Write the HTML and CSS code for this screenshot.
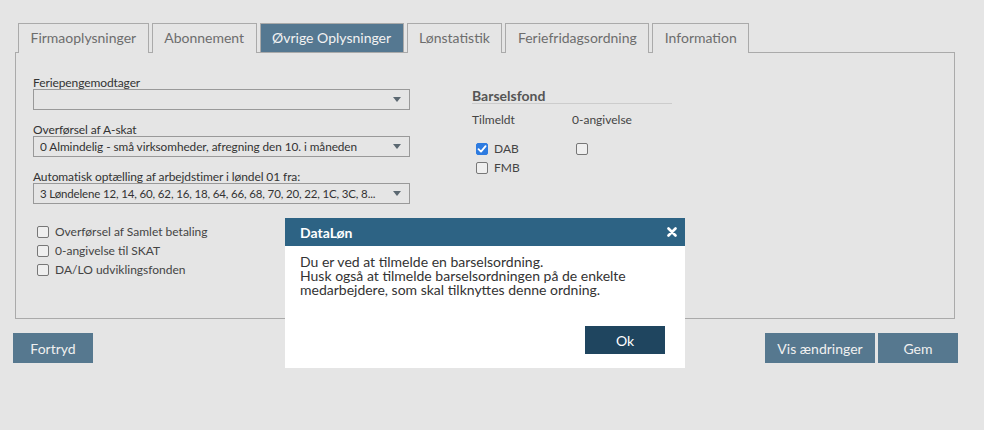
FILE: index.html
```
<!DOCTYPE html>
<html lang="da">
<head>
<meta charset="utf-8">
<title>DataLøn</title>
<link rel="stylesheet" href="styles.css">
</head>
<body>
<div class="page">
  <div class="tabs">
    <div class="tab">Firmaoplysninger</div>
    <div class="tab">Abonnement</div>
    <div class="tab active">Øvrige Oplysninger</div>
    <div class="tab">Lønstatistik</div>
    <div class="tab">Feriefridagsordning</div>
    <div class="tab">Information</div>
  </div>
  <div class="panel">
    <div class="col-left">
      <div class="field">
        <div class="label">Feriepengemodtager</div>
        <div class="select"><span class="value"></span><span class="arrow"></span></div>
      </div>
      <div class="field">
        <div class="label">Overførsel af A-skat</div>
        <div class="select"><span class="value">0 Almindelig - små virksomheder, afregning den 10. i måneden</span><span class="arrow"></span></div>
      </div>
      <div class="field">
        <div class="label">Automatisk optælling af arbejdstimer i løndel 01 fra:</div>
        <div class="select"><span class="value tight">3 Løndelene 12, 14, 60, 62, 16, 18, 64, 66, 68, 70, 20, 22, 1C, 3C, 8...</span><span class="arrow"></span></div>
      </div>
      <div class="checks">
        <div class="check"><span class="box"></span>Overførsel af Samlet betaling</div>
        <div class="check"><span class="box"></span>0-angivelse til SKAT</div>
        <div class="check"><span class="box"></span>DA/LO udviklingsfonden</div>
      </div>
    </div>
    <div class="col-right">
      <div class="heading">Barselsfond</div>
      <div class="fond-grid">
        <div class="sub">Tilmeldt</div>
        <div class="sub">0-angivelse</div>
        <div class="fond-checks">
          <div class="check"><span class="box checked"><svg viewBox="0 0 12 12" width="12" height="12"><path d="M2.5 6.2 L5 8.6 L9.6 3.2" fill="none" stroke="#fff" stroke-width="1.8" stroke-linecap="round" stroke-linejoin="round"/></svg></span>DAB</div>
          <div class="check"><span class="box"></span>FMB</div>
        </div>
        <div class="fond-checks">
          <div class="check"><span class="box"></span></div>
        </div>
      </div>
    </div>
  </div>
  <div class="actions">
    <button class="btn">Fortryd</button>
    <div class="actions-right">
      <button class="btn wide">Vis ændringer</button>
      <button class="btn">Gem</button>
    </div>
  </div>
</div>

<div class="dialog">
  <div class="dialog-head">
    <span class="dialog-title">DataLøn</span>
    <svg class="close" viewBox="0 0 10 10" width="10" height="10"><path d="M1.5 1.5 L8.5 8.5 M8.5 1.5 L1.5 8.5" stroke="#fff" stroke-width="2.6" stroke-linecap="round"/></svg>
  </div>
  <div class="dialog-body">
    <p>Du er ved at tilmelde en barselsordning.<br>Husk også at tilmelde barselsordningen på de enkelte medarbejdere, som skal tilknyttes denne ordning.</p>
    <div class="dialog-foot"><button class="ok">Ok</button></div>
  </div>
</div>
</body>
</html>
```
FILE: styles.css
```
html, body {
  margin: 0;
  padding: 0;
}
body {
  background: #e5e5e5;
  font-family: Lato, "Open Sans", sans-serif;
  color: #333;
  width: 984px;
  height: 430px;
  overflow: hidden;
  position: relative;
}
.page {
  padding-top: 23px;
}
.tabs {
  display: flex;
  gap: 3px;
  padding-left: 18px;
  height: 29px;
}
.tab {
  box-sizing: border-box;
  height: 30px;
  border: 1px solid #aaa;
  border-bottom: none;
  padding: 0 11.5px;
  font-size: 14px;
  line-height: 28px;
  color: #6d6d6d;
  background: #e5e5e5;
  position: relative;
  z-index: 1;
}
.tab.active {
  background: #557891;
  color: #f2f2f2;
  height: 29px;
}
.panel {
  margin-left: 15px;
  width: 940px;
  height: 267px;
  box-sizing: border-box;
  border: 1px solid #aaa;
  display: flex;
  padding: 23px 0 0 17px;
}
.col-left {
  width: 377px;
  display: flex;
  flex-direction: column;
  gap: 13px;
}
.field .label {
  font-size: 12px;
  line-height: 13px;
  color: #333;
  height: 13px;
  letter-spacing: -0.1px;
}
.select {
  box-sizing: border-box;
  height: 21px;
  border: 1px solid #999;
  display: flex;
  align-items: center;
  padding: 0 8px 0 6px;
  font-size: 11.8px;
  letter-spacing: -0.06px;
  color: #333;
}
.select .value {
  flex: 1;
  white-space: nowrap;
  overflow: hidden;
}
.select .value.tight {
  font-size: 11.5px;
  letter-spacing: -0.15px;
}
.arrow {
  width: 0;
  height: 0;
  border-left: 4.5px solid transparent;
  border-right: 4.5px solid transparent;
  border-top: 5px solid #5b6871;
  margin-left: 4px;
}
.checks {
  margin-top: 5px;
  padding-left: 4px;
  display: flex;
  flex-direction: column;
}
.check {
  display: flex;
  align-items: center;
  height: 19px;
  font-size: 12px;
  color: #444;
}
.box {
  box-sizing: border-box;
  width: 12px;
  height: 12px;
  border: 1px solid #777;
  border-radius: 2px;
  background: #efefef;
  margin-right: 6px;
  display: flex;
  flex: none;
}
.box.checked {
  background: #2d7be0;
  border-color: #2d7be0;
}
.box svg {
  width: 12px;
  height: 12px;
  margin: -1px;
}
.col-right {
  margin-left: 62px;
  width: 200px;
  padding-top: 12px;
}
.heading {
  font-size: 14px;
  font-weight: bold;
  color: #555;
  line-height: 15px;
  padding-bottom: 0;
  border-bottom: 1px solid #ccc;
}
.fond-grid {
  display: grid;
  grid-template-columns: 100px 100px;
  row-gap: 12px;
  margin-top: 9px;
}
.sub {
  font-size: 12px;
  line-height: 14px;
  color: #444;
}
.fond-checks {
  padding-left: 4px;
}
.actions {
  display: flex;
  justify-content: space-between;
  padding: 14px 26px 0 13px;
}
.actions-right {
  display: flex;
  gap: 3px;
}
.btn {
  width: 80px;
  height: 30px;
  background: #56788f;
  color: #f0f0f0;
  border: none;
  font-family: Lato, sans-serif;
  font-size: 14px;
  padding: 0;
}
.btn.wide {
  width: 110px;
}
.dialog {
  position: absolute;
  left: 285px;
  top: 218px;
  width: 400px;
  height: 150px;
  background: #fff;
  display: flex;
  flex-direction: column;
}
.dialog-head {
  height: 28px;
  background: #2d6384;
  display: flex;
  align-items: center;
  justify-content: space-between;
  padding: 0 8px 0 15px;
}
.dialog-title {
  color: #fff;
  font-weight: bold;
  font-size: 14px;
}
.close {
  width: 10px;
  height: 10px;
}
.dialog-body {
  flex: 1;
  display: flex;
  flex-direction: column;
  padding: 9px 20px 14px 15px;
}
.dialog-body p {
  margin: 0;
  font-size: 14px;
  line-height: 14px;
  color: #333;
}
.dialog-foot {
  margin-top: auto;
  display: flex;
  justify-content: flex-end;
}
.ok {
  width: 80px;
  height: 28px;
  background: #1f455f;
  color: #fff;
  border: none;
  font-family: Lato, sans-serif;
  font-size: 14px;
  padding: 0;
}
```
